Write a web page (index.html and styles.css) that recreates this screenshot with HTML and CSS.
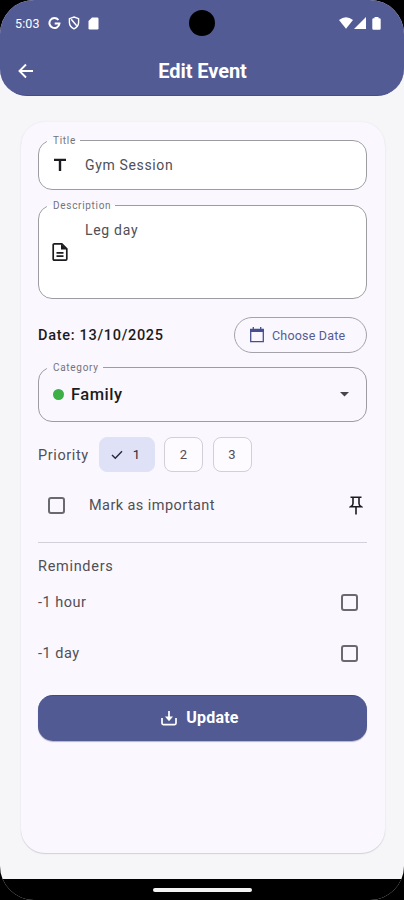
FILE: index.html
```html
<!DOCTYPE html>
<html lang="en">
<head>
<meta charset="utf-8">
<title>Edit Event</title>
<link rel="stylesheet" href="styles.css">
</head>
<body>
<div class="screen">
  <header class="header">
    <div class="status">
      <div class="status-left">
        <span class="clock">5:03</span>
        <svg class="google" width="13" height="13" viewBox="0 0 13 13"><path d="M10.4 3A5 5 0 1 0 11.4 6.6H6.7" fill="none" stroke="#fff" stroke-width="2"/></svg>
        <svg class="shield" width="12" height="14" viewBox="0 0 12 14"><path d="M6 1 10.6 2.7V6.6Q10.4 10.8 6 12.8Q1.600 10.800 1.400 6.600V2.700Z" fill="none" stroke="#fff" stroke-width="1.400"/><path d="M3.200 3.300 8.700 9.800" stroke="#fff" stroke-width="1.500"/></svg>
        <svg class="sd" width="11" height="13" viewBox="0 0 11 13"><path d="M4 .5H9.300Q10.500.5 10.500 1.700V11.300Q10.500 12.500 9.300 12.500H1.700Q.5 12.500.5 11.300V4Z" fill="#fff"/></svg>
      </div>
      <span class="camera"></span>
      <div class="status-right">
        <svg width="14" height="12" viewBox="0 0 14 12"><path d="M0 3Q7-2.600 14 3L7 11.700Z" fill="#fff"/></svg>
        <svg width="12" height="12" viewBox="0 0 12 12"><path d="M12 0V12H0Z" fill="#fff"/></svg>
        <svg class="battery" width="9" height="13" viewBox="0 0 9 13"><path d="M2.500 1.300V0H6.500V1.300H7.500Q8.700 1.300 8.700 2.500V11.500Q8.700 12.700 7.500 12.700H1.500Q.3 12.700.3 11.500V2.500Q.3 1.300 1.500 1.300Z" fill="#fff"/></svg>
      </div>
    </div>
    <div class="appbar">
      <svg class="back" width="16" height="16" viewBox="0 0 16 16"><path d="M15 8H1.700M8 1.500 1.500 8 8 14.500" fill="none" stroke="#fff" stroke-width="1.900"/></svg>
      <h1>Edit Event</h1>
    </div>
  </header>

  <main class="card">
    <fieldset class="field title-field">
      <legend>Title</legend>
      <svg class="lead" width="14" height="14" viewBox="0 0 14 14"><path d="M1 1.900H13M7 2V13" fill="none" stroke="#1c1b20" stroke-width="2.400"/></svg>
      <span class="value">Gym Session</span>
    </fieldset>
    <fieldset class="field desc-field">
      <legend>Description</legend>
      <svg class="lead doc" width="16" height="18" viewBox="0 0 16 18"><path d="M2 .9H9.800L14.800 5.800V16Q14.800 17.100 13.700 17.100H2.300Q1.200 17.100 1.200 16V2Q1.200.9 2.300.9M4.500 9.800H11.500M4.500 13.200H11.500" fill="none" stroke="#1c1b20" stroke-width="1.700"/><path d="M9 1 15 6.500H9Z" fill="#1c1b20"/></svg>
      <span class="value">Leg day</span>
    </fieldset>

    <div class="date-row">
      <span class="date">Date: 13/10/2025</span>
      <button class="choose">
        <svg width="16" height="16" viewBox="0 0 16 16"><path d="M1.700 2.500H14.300V14.600H1.700ZM4.300 0V3M11.700 0V3" fill="none" stroke="#46508e" stroke-width="1.300"/><path d="M1.200 2H14.800V5H1.200Z" fill="#46508e"/></svg>
        <span>Choose Date</span>
      </button>
    </div>

    <fieldset class="field category-field">
      <legend>Category</legend>
      <span class="dot"></span>
      <span class="category">Family</span>
      <svg class="caret" width="9" height="5" viewBox="0 0 9 5"><path d="M0 0H9L4.500 4.600Z" fill="#46454b"/></svg>
    </fieldset>

    <div class="priority">
      <span class="priority-label">Priority</span>
      <span class="chip selected"><svg width="12" height="10" viewBox="0 0 12 10"><path d="M1 5 4.300 8.300 11 1.300" fill="none" stroke="#25283c" stroke-width="1.400"/></svg>1</span>
      <span class="chip">2</span>
      <span class="chip">3</span>
    </div>

    <div class="important">
      <span class="box"></span>
      <span class="important-label">Mark as important</span>
      <svg class="pin" width="14" height="19" viewBox="0 0 14 19"><path d="M1.500 1.200H12.500M4 1V7.500Q4 9.400 1.700 10.800H12.300Q10 9.400 10 7.500V1M7 11V18.500" fill="none" stroke="#1c1b20" stroke-width="1.600"/></svg>
    </div>

    <section class="reminders">
      <h2>Reminders</h2>
      <div class="reminder"><span>-1 hour</span><span class="box"></span></div>
      <div class="reminder"><span>-1 day</span><span class="box"></span></div>
    </section>

    <button class="update">
      <svg width="16" height="16" viewBox="0 0 16 16"><path d="M1 8V13.300Q1 14.600 2.300 14.600H13.700Q15 14.600 15 13.300V8M8 1V8" fill="none" stroke="#fff" stroke-width="1.700"/><path d="M4 6.500H12L8 11.200Z" fill="#fff"/></svg>
      <span>Update</span>
    </button>
  </main>

  <footer class="navbar"><span class="handle"></span></footer>
</div>
</body>
</html>
```
FILE: styles.css
```css
* { box-sizing: border-box; }
html, body { margin: 0; background: #000; }
body { font-family: Roboto, "Liberation Sans", sans-serif; color: #504f55; }
svg { display: block; flex: none; }
button { font-family: inherit; margin: 0; padding: 0; }

.screen {
  width: 404px;
  height: 900px;
  display: flex;
  flex-direction: column;
  background: #f6f6f9;
  border-radius: 34px;
  overflow: hidden;
}
.header {
  height: 96px;
  flex: none;
  background: #535b94;
  border-bottom: 1px solid #444d8b;
  border-radius: 0 0 27px 27px;
  color: #fff;
}
.status {
  height: 46px;
  display: grid;
  grid-template-columns: 1fr 26px 1fr;
  align-items: center;
}
.status-left { display: flex; align-items: center; padding-left: 15px; }
.clock { font-size: 12.5px; width: 33px; letter-spacing: 0.1px; }
.shield { margin-left: 7px; }
.sd { margin-left: 8px; }
.camera { width: 26px; height: 26px; border-radius: 50%; background: #000; }
.status-right { display: flex; align-items: center; justify-content: flex-end; gap: 1px; padding-right: 23px; }
.battery { margin-left: 5px; }
.appbar {
  height: 49px;
  display: grid;
  grid-template-columns: 40px 1fr 40px;
  align-items: center;
}
.back { margin-left: 18px; }
h1 { margin: 0; text-align: center; font-size: 20px; font-weight: 700; line-height: 24px; letter-spacing: -0.05px; padding-left: 1px; }

.card {
  margin: 26px 19px 26px 21px;
  height: 731px;
  flex: none;
  padding: 12px 18px 0 17px;
  background: #faf7ff;
  border-radius: 24px;
  box-shadow: 0 1px 1px #d2d1d6, 0 0 2px #e7e6eb;
}
.field {
  display: flex;
  margin: 0;
  min-width: 0;
  padding: 0 17px 0 8px;
  border: 1px solid #9d9ca1;
  border-radius: 14px;
  background: #fff;
}
legend {
  height: 12px;
  padding: 0 4px 0 6px;
  font-size: 10px;
  line-height: 13px;
  letter-spacing: 0.7px;
  color: #747379;
}
.value { font-size: 14px; line-height: 20px; letter-spacing: 0.65px; }
.title-field { height: 56px; }
.title-field .lead { margin: 12px 18px 0 6px; }
.title-field .value { margin-top: 9px; }
.desc-field { height: 100px; margin-top: 9px; }
.desc-field .lead { margin: 32px 17px 0 5px; }
.desc-field .value { margin-top: 9px; letter-spacing: 0.7px; }

.date-row { height: 36px; margin-top: 18px; display: flex; align-items: center; justify-content: space-between; }
.date { font-size: 14.5px; font-weight: 500; letter-spacing: 0.7px; color: #1c1b20; }
.choose {
  width: 133px;
  height: 36px;
  display: flex;
  align-items: center;
  gap: 7px;
  padding-left: 14px;
  border: 1px solid #a4a3aa;
  border-radius: 18px;
  background: transparent;
  color: #555c8f;
  font-size: 12.5px;
  letter-spacing: 0.2px;
}
.category-field { height: 61px; margin-top: 8px; padding-bottom: 6px; background: transparent; align-items: center; }
.dot { width: 11px; height: 11px; border-radius: 50%; background: #3caf46; margin-left: 6px; }
.category { margin-left: 7px; font-size: 16.5px; font-weight: 500; color: #1c1b20; letter-spacing: 0.5px; }
.caret { margin-left: auto; }

.priority { height: 35px; margin-top: 15px; display: flex; align-items: center; gap: 9px; }
.priority-label { width: 52px; font-size: 14.5px; line-height: 19px; padding-top: 1px; letter-spacing: 0.6px; }
.chip {
  width: 39px;
  height: 35px;
  display: flex;
  align-items: center;
  justify-content: center;
  border: 1px solid #d2d0d7;
  border-radius: 8px;
  background: #fdfbff;
  font-size: 13px;
}
.chip + .chip { margin-left: 0.5px; }
.chip.selected { width: 56px; gap: 10px; background: #dfe1f7; border-color: #dfe1f7; color: #25283c; margin-right: -0.5px; padding-right: 3px; }

.important { height: 38px; margin-top: 14px; display: flex; align-items: center; padding: 0 4px 0 10px; }
.box { width: 17px; height: 17px; flex: none; border: 2px solid #6b6970; border-radius: 3px; }
.important-label { margin-left: 24px; font-size: 14.5px; letter-spacing: 0.43px; }
.pin { margin-left: auto; }

.reminders { margin-top: 18px; border-top: 1px solid #d3d0d9; }
h2 { margin: 14px 0 0; font-size: 14.5px; line-height: 20px; font-weight: 400; letter-spacing: 0.7px; }
.reminder {
  height: 51px;
  display: flex;
  align-items: center;
  justify-content: space-between;
  padding-right: 9px;
  font-size: 14.5px;
  letter-spacing: 0.5px;
}
.update {
  width: 100%;
  height: 46px;
  margin-top: 16px;
  display: flex;
  align-items: center;
  justify-content: center;
  gap: 9px;
  padding: 0 5px 2px 0;
  border: 0;
  border-top: 1px solid #3e4883;
  border-radius: 15px;
  background: #515a93;
  box-shadow: 0 1px 1px #b5b3c2;
  color: #fff;
  font-size: 16px;
  font-weight: 700;
  letter-spacing: 0.2px;
}
.navbar { height: 21px; flex: none; background: #000; display: flex; justify-content: center; padding: 9px 0 0 1px; }
.handle { width: 99px; height: 4px; border-radius: 2px; background: #f4f4f4; }
```
